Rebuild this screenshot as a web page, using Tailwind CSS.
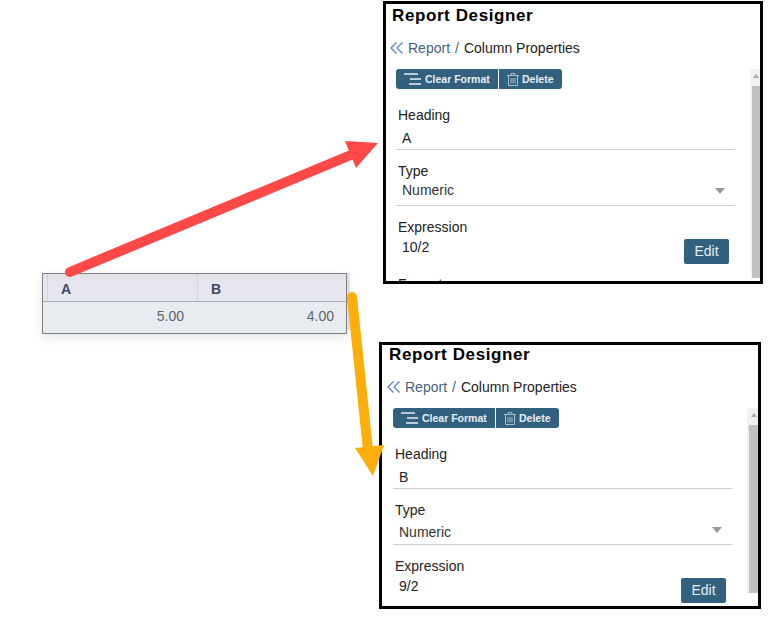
<!DOCTYPE html>
<html lang="en">
<head>
    <meta charset="UTF-8">
    <title>Report Designer</title>
    <script src="https://cdn.jsdelivr.net/npm/@tailwindcss/browser@4"></script>
</head>
<body class="bg-white font-['Liberation_Sans',Arial,sans-serif]">
    <div class="relative w-[782px] h-[637px] overflow-hidden">

        <!-- grid preview -->
        <div class="absolute left-[347px] top-[273px] w-[3px] h-[57px] bg-[#e8e8e8]"></div>
        <div class="absolute left-[42px] top-[273px] w-[305px] h-[61px] border border-[#808080] bg-[#e6ecf0] shadow-[0_4px_10px_rgba(0,0,0,0.1)] flex flex-col">
            <div class="h-[28px] bg-linear-to-b from-[#dfe0e8] to-[#e5e6ee] to-30% border-b border-[#a9adb5] flex text-[14px] font-bold text-[#3d4a63]">
                <div class="w-[5px] border-r border-[#d0d2da]"></div>
                <div class="w-[150px] pl-[13px] pt-[5px] border-r border-[#d0d2da]">A</div>
                <div class="flex-1 pl-[13px] pt-[5px]">B</div>
            </div>
            <div class="flex-1 flex text-[14px] text-[#5f6468]">
                <div class="w-[154px] text-right pr-[13px] pt-[4px]">5.00</div>
                <div class="flex-1 text-right pr-[12px] pt-[4px]">4.00</div>
            </div>
        </div>

        <!-- panel for column A -->
        <div class="absolute left-[383px] top-[1px] w-[380px] h-[283px] border-[3px] border-black bg-white overflow-hidden">
            <div class="pl-[6px] pt-[1px] h-[24px] text-[17px] leading-[22px] font-bold text-black tracking-[0.6px]">Report Designer</div>
            <div class="flex items-center h-[20px] mt-[10px] pl-[4px] text-[14px]">
                <svg class="w-[14px] h-[14px] mr-[4px]" viewBox="0 0 14 14" fill="none" stroke="#5b7fb0" stroke-width="1.2"><path d="M6.5 1.5 1 7 6.5 12.5M12.5 1.5 7 7 12.5 12.5"/></svg>
                <span class="text-[#49617c]">Report</span>
                <span class="text-[#49617c] mx-[5px]">/</span>
                <span class="text-[#222]">Column Properties</span>
            </div>
            <div class="relative">
                <div class="flex h-[20px] mt-[11px] ml-[10px] text-[10.5px] font-bold text-[#e8eef2]">
                    <div class="w-[102px] bg-[#31617f] rounded-l-[3px] flex items-center pl-[8px]">
                        <svg class="w-[17px] h-[12px] mr-[4px]" viewBox="0 0 17 12" fill="none" stroke="#e8eef2" stroke-width="1.5"><path d="M0 1H14M6 6H17M5 11H17"/></svg>
                        <span class="mt-px">Clear Format</span>
                    </div>
                    <div class="w-[63px] ml-px bg-[#31617f] rounded-r-[3px] flex items-center pl-[8px]">
                        <svg class="w-[12px] h-[13px] mr-[3px]" viewBox="0 0 12 13" fill="none" stroke="#a9bfcc" stroke-width="1"><path d="M0 2.5H12M4 2.5V.5H8V2.5M1.5 2.5V12.5H10.5V2.5M4 5V10.5M6 5V10.5M8 5V10.5"/></svg>
                        <span class="mt-px">Delete</span>
                    </div>
                </div>
                <div class="mt-[16px] ml-[12px] text-[14px] leading-[20px] text-[#222]">Heading</div>
                <div class="ml-[10px] w-[339px] h-[23px] mt-[2px] pl-[6px] pt-[1px] border-b border-[#ccced4] text-[14px] leading-[20px] text-[#222]">A</div>
                <div class="mt-[11px] ml-[12px] text-[14px] leading-[20px] text-[#222]">Type</div>
                <div class="ml-[10px] w-[339px] h-[25px] pl-[6px] border-b border-[#ccced4] text-[14px] leading-[18px] text-[#333] flex justify-between">
                    <span>Numeric</span>
                    <span class="w-0 h-0 mt-[7px] mr-[10px] border-x-[5px] border-x-transparent border-t-[6px] border-t-[#999]"></span>
                </div>
                <div class="mt-[11px] ml-[12px] text-[14px] leading-[20px] text-[#222]">Expression</div>
                <div class="flex justify-between ml-[10px] w-[333px] text-[14px]">
                    <span class="pl-[6px] text-[#222]">10/2</span>
                    <button class="w-[45px] h-[25px] mt-[2px] bg-[#31617f] rounded-[2px] text-[14px] text-[#e8eef2]">Edit</button>
                </div>
                <div class="mt-[10px] ml-[12px] text-[14px] leading-[20px] text-[#222]">Format</div>
                <div class="absolute right-0 top-0 w-[9px] h-[209px] bg-[#f1f1f1]">
                    <div class="w-0 h-0 ml-[2px] mt-[5px] border-x-[3px] border-x-transparent border-b-[4px] border-b-[#aaa]"></div>
                    <div class="mt-[8px] ml-px h-[192px] bg-[#c1c1c1]"></div>
                </div>
            </div>
        </div>

        <!-- panel for column B -->
        <div class="absolute left-[379px] top-[342px] w-[382px] h-[267px] border-[3px] border-black bg-white overflow-hidden">
            <div class="pl-[7px] h-[23px] text-[17px] leading-[20px] font-bold text-black tracking-[0.6px]">Report Designer</div>
            <div class="flex items-center h-[20px] mt-[9px] pl-[5px] text-[14px]">
                <svg class="w-[14px] h-[14px] mr-[4px]" viewBox="0 0 14 14" fill="none" stroke="#5b7fb0" stroke-width="1.2"><path d="M6.5 1.5 1 7 6.5 12.5M12.5 1.5 7 7 12.5 12.5"/></svg>
                <span class="text-[#49617c]">Report</span>
                <span class="text-[#49617c] mx-[5px]">/</span>
                <span class="text-[#222]">Column Properties</span>
            </div>
            <div class="relative">
                <div class="flex h-[20px] mt-[11px] ml-[11px] text-[10.5px] font-bold text-[#e8eef2]">
                    <div class="w-[102px] bg-[#31617f] rounded-l-[3px] flex items-center pl-[8px]">
                        <svg class="w-[17px] h-[12px] mr-[4px]" viewBox="0 0 17 12" fill="none" stroke="#e8eef2" stroke-width="1.5"><path d="M0 1H14M6 6H17M5 11H17"/></svg>
                        <span class="mt-px">Clear Format</span>
                    </div>
                    <div class="w-[63px] ml-px bg-[#31617f] rounded-r-[3px] flex items-center pl-[8px]">
                        <svg class="w-[12px] h-[13px] mr-[3px]" viewBox="0 0 12 13" fill="none" stroke="#a9bfcc" stroke-width="1"><path d="M0 2.5H12M4 2.5V.5H8V2.5M1.5 2.5V12.5H10.5V2.5M4 5V10.5M6 5V10.5M8 5V10.5"/></svg>
                        <span class="mt-px">Delete</span>
                    </div>
                </div>
                <div class="mt-[16px] ml-[13px] text-[14px] leading-[20px] text-[#222]">Heading</div>
                <div class="ml-[11px] w-[339px] h-[23px] mt-[2px] pl-[6px] pt-[1px] border-b border-[#ccced4] text-[14px] leading-[20px] text-[#222]">B</div>
                <div class="mt-[11px] ml-[13px] text-[14px] leading-[20px] text-[#222]">Type</div>
                <div class="ml-[11px] w-[339px] h-[25px] pl-[6px] pt-[3px] border-b border-[#ccced4] text-[14px] leading-[18px] text-[#333] flex justify-between">
                    <span>Numeric</span>
                    <span class="w-0 h-0 mt-[4px] mr-[10px] border-x-[5px] border-x-transparent border-t-[6px] border-t-[#999]"></span>
                </div>
                <div class="mt-[11px] ml-[13px] text-[14px] leading-[20px] text-[#222]">Expression</div>
                <div class="flex justify-between ml-[11px] w-[333px] text-[14px]">
                    <span class="pl-[6px] text-[#222]">9/2</span>
                    <button class="w-[45px] h-[25px] mt-[2px] bg-[#31617f] rounded-[2px] text-[14px] text-[#e8eef2]">Edit</button>
                </div>
                <div class="absolute right-0 top-0 w-[11px] h-[185px] bg-[#f1f1f1]">
                    <div class="w-0 h-0 ml-[4px] mt-[5px] border-x-[3px] border-x-transparent border-b-[4px] border-b-[#aaa]"></div>
                    <div class="mt-[8px] ml-[2px] h-[168px] bg-[#c1c1c1]"></div>
                </div>
            </div>
        </div>

        <!-- arrows -->
        <svg class="absolute left-0 top-0 pointer-events-none" width="782" height="637" viewBox="0 0 782 637" fill="none">
            <path d="M70 272 358 152" stroke="#ff4949" stroke-width="10" stroke-linecap="round"/>
            <path d="M345 141 378 143 356 168Z" fill="#ff4949"/>
            <path d="M352 297 368 450" stroke="#fdae0b" stroke-width="10" stroke-linecap="round"/>
            <path d="M355 448 373 476 384 445Z" fill="#fdae0b"/>
        </svg>
    </div>
</body>
</html>
